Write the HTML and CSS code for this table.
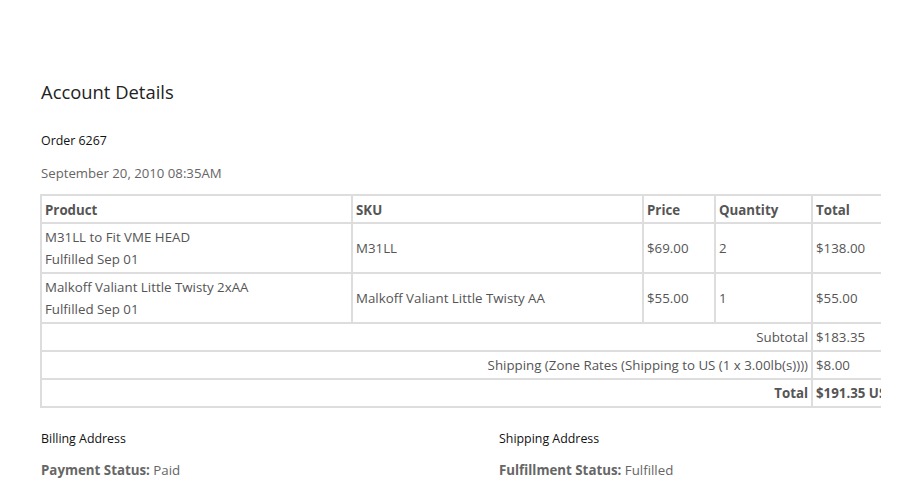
FILE: index.html
```html
<!DOCTYPE html>
<html lang="en">
<head>
    <meta charset="UTF-8">
    <title>Account Details</title>
    <link rel="stylesheet" href="styles.css">
</head>
<body>
    <div class="page">
        <h1 class="title">Account Details</h1>
        <h2 class="order">Order 6267</h2>
        <p class="date">September 20, 2010 08:35AM</p>

        <div class="table-wrap">
            <table class="order-table">
                <colgroup>
                    <col class="c-product">
                    <col class="c-sku">
                    <col class="c-price">
                    <col class="c-qty">
                    <col class="c-total">
                </colgroup>
                <thead>
                    <tr>
                        <th>Product</th>
                        <th>SKU</th>
                        <th>Price</th>
                        <th>Quantity</th>
                        <th>Total</th>
                    </tr>
                </thead>
                <tbody>
                    <tr class="item">
                        <td>M31LL to Fit VME HEAD<br>Fulfilled Sep 01</td>
                        <td>M31LL</td>
                        <td>$69.00</td>
                        <td>2</td>
                        <td>$138.00</td>
                    </tr>
                    <tr class="item">
                        <td>Malkoff Valiant Little Twisty 2xAA<br>Fulfilled Sep 01</td>
                        <td>Malkoff Valiant Little Twisty AA</td>
                        <td>$55.00</td>
                        <td>1</td>
                        <td>$55.00</td>
                    </tr>
                </tbody>
                <tfoot>
                    <tr>
                        <td class="label" colspan="4">Subtotal</td>
                        <td>$183.35</td>
                    </tr>
                    <tr>
                        <td class="label" colspan="4">Shipping (Zone Rates (Shipping to US (1 x 3.00lb(s))))</td>
                        <td>$8.00</td>
                    </tr>
                    <tr class="grand">
                        <td class="label" colspan="4">Total</td>
                        <td>$191.35 USD</td>
                    </tr>
                </tfoot>
            </table>
        </div>

        <div class="addresses">
            <div class="address">
                <h3>Billing Address</h3>
                <p><strong>Payment Status:</strong> Paid</p>
            </div>
            <div class="address">
                <h3>Shipping Address</h3>
                <p><strong>Fulfillment Status:</strong> Fulfilled</p>
            </div>
        </div>
    </div>
</body>
</html>
```

FILE: styles.css
```css
body {
    margin: 0;
    font-family: 'Open Sans', sans-serif;
    color: #555;
    background: #fff;
}
.page {
    width: 841px;
    padding: 77px 0 0 40px;
    overflow: hidden;
}
.title {
    margin: 0 0 0 1px;
    font-size: 18.4px;
    font-weight: normal;
    line-height: 30px;
    color: #222;
}
.order {
    margin: 24px 0 0 1px;
    font-size: 12.4px;
    font-weight: normal;
    line-height: 20px;
    color: #111;
}
.date {
    margin: 12px 0 0 1px;
    font-size: 13.2px;
    line-height: 20px;
    color: #666;
}
.table-wrap {
    margin-top: 11px;
    overflow: hidden;
}
.order-table {
    table-layout: fixed;
    width: 880px;
    border-collapse: collapse;
    font-size: 13.3px;
    line-height: 22px;
    color: #555;
}
.c-product { width: 311px; }
.c-sku { width: 291px; }
.c-price { width: 72px; }
.c-qty { width: 97px; }
.order-table th,
.order-table td {
    border: 2px solid #ddd;
    padding: 2px 3px;
    text-align: left;
    vertical-align: middle;
    white-space: nowrap;
}
.order-table th {
    padding: 3px 3px 1px;
    font-weight: bold;
    color: #555;
}
.order-table .label {
    text-align: right;
}
.grand td {
    font-weight: bold;
}
.addresses {
    display: flex;
    margin-top: 21px;
}
.address {
    flex: 0 0 458px;
    padding-left: 1px;
    box-sizing: border-box;
}
.address h3 {
    margin: 0;
    font-size: 12.4px;
    font-weight: normal;
    line-height: 20px;
    color: #111;
}
.address p {
    margin: 10px 0 0;
    font-size: 13.3px;
    line-height: 22px;
    color: #666;
}
.address strong {
    color: #666;
}
```
